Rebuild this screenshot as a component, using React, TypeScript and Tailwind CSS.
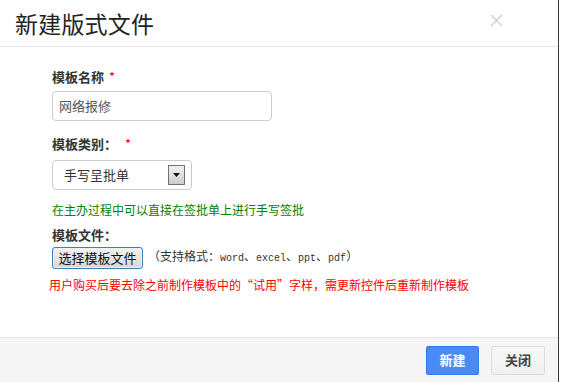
const cjk = { fontFamily: '"Noto Sans CJK SC", "Liberation Sans", sans-serif' };

function Label({ text, star, gap }: { text: string; star?: boolean; gap?: string }) {
  return (
    <div className="flex h-4 items-center text-[13px] font-bold leading-4 text-[#333]">
      <span>{text}</span>
      {star && <span className={`${gap ?? 'ml-1'} font-normal text-[#e00]`}>*</span>}
    </div>
  );
}

export default function App() {
  return (
    <div className="h-[382px] w-[562px] overflow-hidden bg-white" style={cjk}>
      <div className="flex h-[382px] w-[559px] flex-col border-r border-[#3a3a3a] bg-white">
        {/* Header */}
        <div className="flex h-[47px] shrink-0 items-center justify-between border-b border-[#e5e5e5] pl-[15px] pr-[55px]">
          <h1 className="text-[23px] font-normal leading-none tracking-[0.2px] text-[#222]">新建版式文件</h1>
          <svg width="13" height="13" viewBox="0 0 13 13" className="-mt-[5px]">
            <path d="M1 1 L12 12 M12 1 L1 12" stroke="#cfcfcf" strokeWidth="1.4" />
          </svg>
        </div>

        {/* Body */}
        <div className="flex flex-1 flex-col pl-[52px]">
          <div className="mt-[22px]">
            <Label text="模板名称" star gap="ml-[5px]" />
          </div>
          <div className="mt-[6px] flex h-[30px] w-[220px] items-center rounded-[4px] border border-[#ccc] px-[6px] text-[13px] text-[#555]">
            网络报修
          </div>

          <div className="mt-[15px]">
            <Label text="模板类别：" star gap="ml-[8px]" />
          </div>
          <div className="mt-[8px] flex h-[30px] w-[140px] items-center justify-between rounded-[4px] border border-[#ccc] pl-[11px] pr-[6px] text-[13px] text-[#333]">
            <span>手写呈批单</span>
            <span className="flex h-[20px] w-[17px] items-center justify-center border border-[#707070] bg-gradient-to-b from-[#f0f0f0] to-[#cdcdcd]">
              <svg width="7" height="4" viewBox="0 0 7 4">
                <path d="M0 0 H7 L3.5 4 Z" fill="#111" />
              </svg>
            </span>
          </div>

          <div className="mt-[12px] h-4 text-[12px] leading-4 text-[#008000]">在主办过程中可以直接在签批单上进行手写签批</div>

          <div className="mt-[9px]">
            <Label text="模板文件：" />
          </div>
          <div className="mt-[4px] flex items-center">
            <button className="flex h-[22px] w-[91px] items-center justify-center rounded-[3px] border border-[#3c7fb1] bg-gradient-to-b from-[#f3f3f3] to-[#d6d6d6] text-[13px] text-[#111] shadow-[inset_0_0_0_1px_#e8f4fc]">
              选择模板文件
            </button>
            <span
              className="ml-[5px] text-[12px] text-[#333]"
              style={{ fontFamily: '"Liberation Mono", "Noto Sans CJK SC", monospace' }}
            >
              （支持格式：<span className="text-[10px]">word</span>、<span className="text-[10px]">excel</span>、<span className="text-[10px]">ppt</span>、<span className="text-[10px]">pdf</span>）
            </span>
          </div>

          <div className="-ml-[3px] mt-[8px] h-4 text-[12px] leading-4 text-[#f00]">
            用户购买后要去除之前制作模板中的“试用”字样，需更新控件后重新制作模板
          </div>
        </div>

        {/* Footer */}
        <div className="flex h-[45px] shrink-0 items-center justify-end gap-[12px] border-t border-[#e3e3e3] bg-[#f5f5f5] pr-[13px]">
          <button className="h-[29px] w-[53px] rounded-[2px] border border-[#3079ed] bg-[#4a8af4] text-[13px] font-bold text-white">
            新建
          </button>
          <button className="h-[29px] w-[54px] rounded-[2px] border border-[#dcdcdc] bg-gradient-to-b from-[#f7f7f7] to-[#f0f0f0] text-[13px] font-bold text-[#444]">
            关闭
          </button>
        </div>
      </div>
    </div>
  );
}
